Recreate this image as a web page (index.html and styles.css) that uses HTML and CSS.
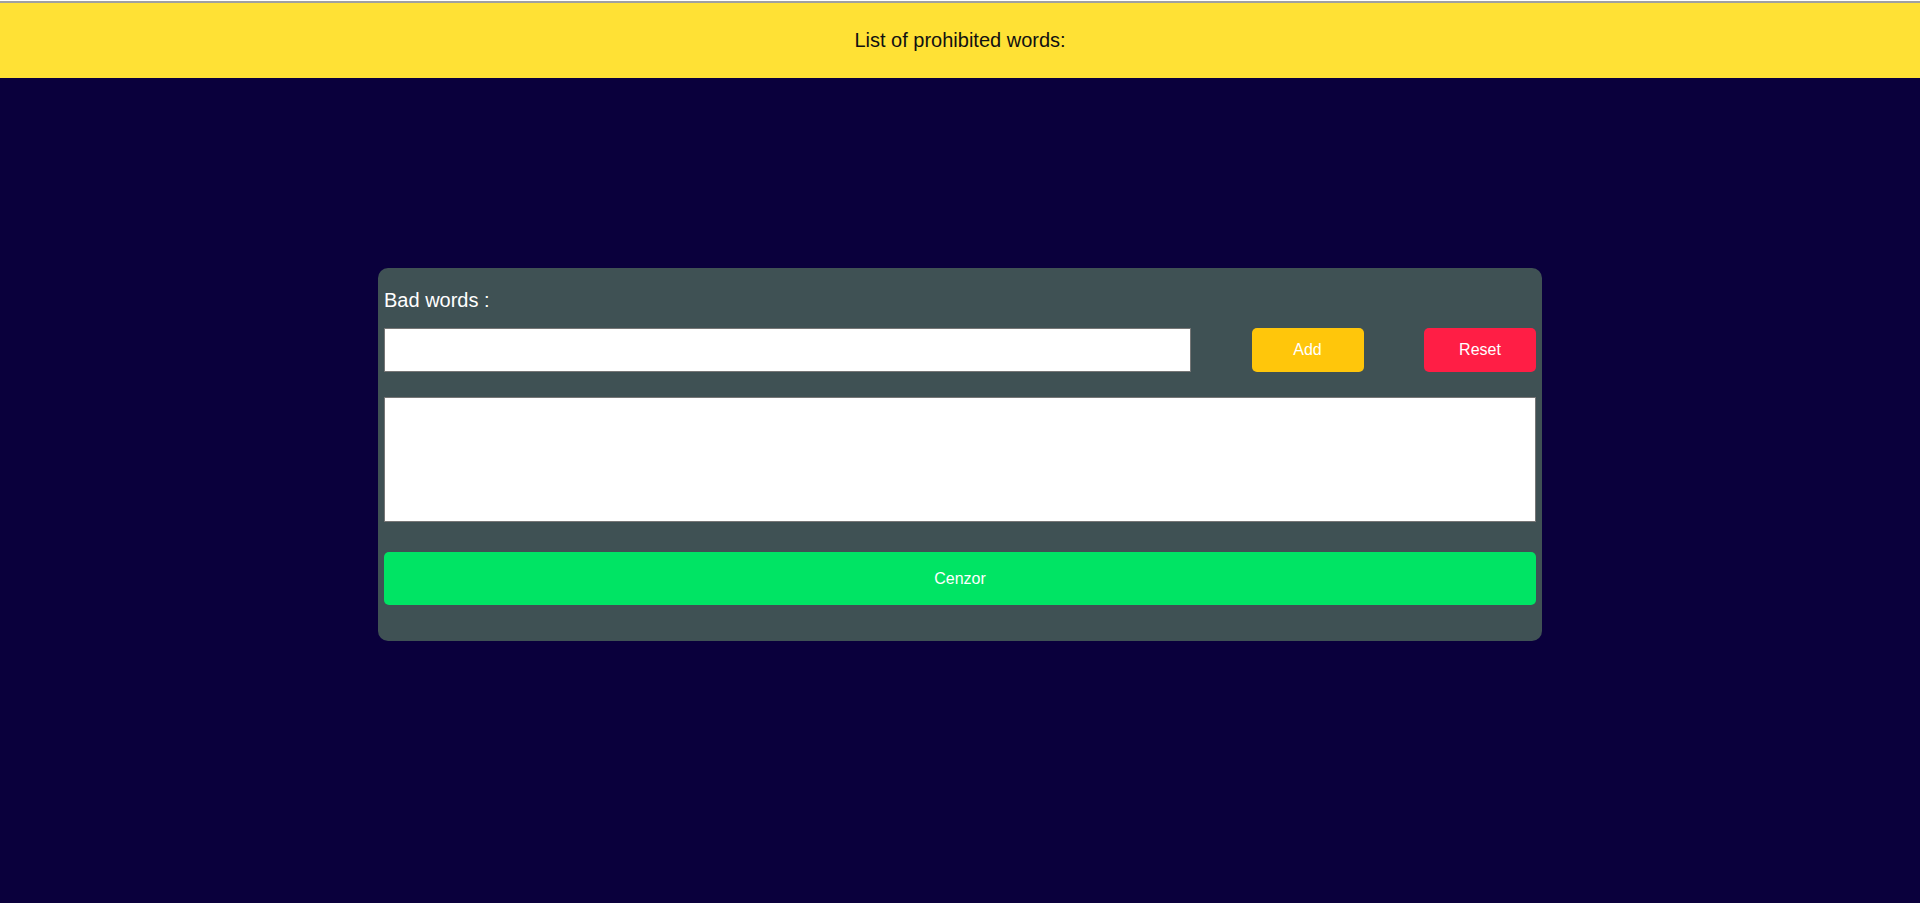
FILE: index.html
```html
<!DOCTYPE html>
<html lang="en">
<head>
<meta charset="utf-8">
<title>Cenzor</title>
<link rel="stylesheet" href="styles.css">
</head>
<body>
<header class="topbar">
  <p class="topbar-title">List of prohibited words:</p>
</header>
<main class="page">
  <section class="card">
    <label class="label" for="word">Bad words :</label>
    <div class="row">
      <input class="word-input" id="word" type="text">
      <button class="btn btn-add" type="button">Add</button>
      <button class="btn btn-reset" type="button">Reset</button>
    </div>
    <textarea class="text"></textarea>
    <button class="btn btn-cenzor" type="button">Cenzor</button>
  </section>
</main>
</body>
</html>
```
FILE: styles.css
```css
html {
  background: #ffffff;
}
body {
  margin: 1px 0 0;
  min-height: 902px;
  background: #0a003c;
  font-family: "Liberation Sans", Arial, sans-serif;
}
.topbar {
  border-top: 2px solid #a0a0a0;
  background: #ffe135;
  height: 75px;
  display: flex;
  align-items: center;
  justify-content: center;
}
.topbar-title {
  margin: 0;
  font-size: 20px;
  color: #111;
}
.page {
  display: flex;
  justify-content: center;
  padding-top: 190px;
}
.card {
  width: 1164px;
  box-sizing: border-box;
  background: #3f5154;
  border-radius: 10px;
  padding: 21px 6px 36px;
  display: flex;
  flex-direction: column;
}
.label {
  display: block;
  color: #ffffff;
  font-size: 20px;
  line-height: 23px;
  margin-bottom: 16px;
}
.row {
  display: flex;
  justify-content: space-between;
  align-items: stretch;
  height: 44px;
}
.word-input {
  width: 807px;
  box-sizing: border-box;
  margin: 0;
  border: 1px solid #767676;
  background: #fff;
  font-size: 16px;
  padding: 0 6px;
}
.btn {
  border: none;
  color: #ffffff;
  font-family: "Liberation Sans", Arial, sans-serif;
  font-size: 16px;
  border-radius: 5px;
  cursor: pointer;
  margin: 0;
}
.btn-add {
  width: 112px;
  background: #ffc60b;
}
.btn-reset {
  width: 112px;
  background: #ff1e45;
}
.text {
  display: block;
  margin: 25px 0 0;
  height: 125px;
  box-sizing: border-box;
  border: 1px solid #767676;
  resize: none;
  background: #fff;
}
.btn-cenzor {
  margin-top: 30px;
  height: 53px;
  background: #00e464;
}
```
